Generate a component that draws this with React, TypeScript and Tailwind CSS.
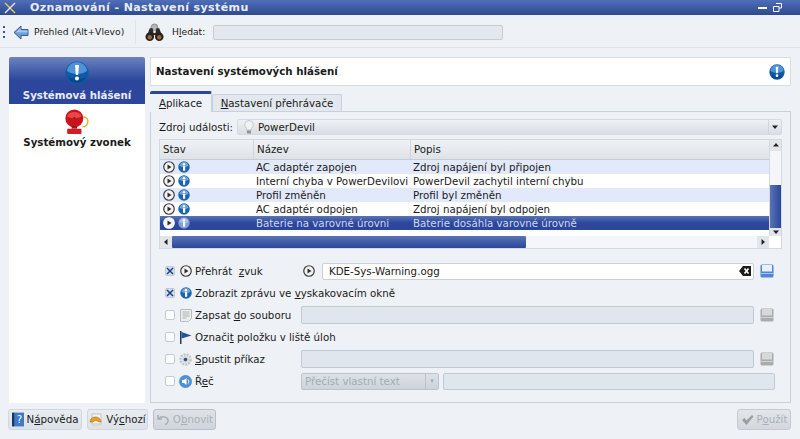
import type { ReactNode } from 'react';

// ─── Icons ─────────────────────────────────────────────────────────────────

function InfoIcon({ size = 12, light = false }: { size?: number; light?: boolean }) {
  return (
    <svg width={size} height={size} viewBox="0 0 24 24" className="shrink-0">
      <circle cx="12" cy="12" r="11.5" fill={light ? '#7f9fd6' : '#1c62ae'} />
      <path d="M3 10a9 8 0 0 1 18 0c-5 3-13 3-18 0z" fill={light ? '#a9c2ea' : '#6ba3dc'} />
      <circle cx="12" cy="6.5" r="2.4" fill="#fff" />
      <rect x="10" y="10" width="4.4" height="9.5" fill="#fff" />
    </svg>
  );
}

function AlertIcon({ size = 24 }: { size?: number }) {
  return (
    <svg width={size} height={size} viewBox="0 0 24 24" className="shrink-0">
      <circle cx="12" cy="12" r="11.5" fill="#0f5aa6" />
      <path d="M2 10a10 9 0 0 1 20 0c-5 4-15 4-20 0z" fill="#4f93d6" />
      <path d="M12 22a10 10 0 0 0 9-6c-4 2-14 2-18 0a10 10 0 0 0 9 6z" fill="#0b4789" />
      <path d="M10 4h4l-.8 10h-2.4z" fill="#fff" />
      <circle cx="12" cy="17.5" r="2" fill="#fff" />
    </svg>
  );
}

function PlayIcon({ light = false }: { light?: boolean }) {
  return (
    <svg width="12" height="12" viewBox="0 0 24 24" className="shrink-0">
      <circle cx="12" cy="12" r="10.5" fill="#f4f4f4" stroke={light ? '#fff' : '#3c3c3c'} strokeWidth="2.4" />
      <path d="M9 7l8 5-8 5z" fill="#2e2e2e" />
    </svg>
  );
}

function BackArrow() {
  return (
    <svg width="16" height="15" viewBox="0 0 16 15" className="shrink-0">
      <path d="M1 7.5L8 1v3.5h7v6H8V14z" fill="#6f9fd8" stroke="#2f5f9c" strokeWidth="1" />
      <path d="M3 7.2L7.5 3v2.500h7v2z" fill="#a9c8ec" />
    </svg>
  );
}

function Binoculars() {
  return (
    <svg width="19" height="19" viewBox="0 0 20 19" className="shrink-0">
      <circle cx="10" cy="4" r="3.5" fill="#b5b5b5" stroke="#8a8a8a" strokeWidth="1" />
      <path d="M5 5h3l1 5h2l1-5h3l3 8H12l-2-1-2 1H2z" fill="#2b2b2b" />
      <circle cx="5" cy="14" r="4.5" fill="#222" />
      <circle cx="15" cy="14" r="4.5" fill="#222" />
      <circle cx="5" cy="14.5" r="2.3" fill="#a8652a" />
      <circle cx="15" cy="14.5" r="2.3" fill="#a8652a" />
    </svg>
  );
}

function Bell() {
  return (
    <svg width="24" height="25" viewBox="0 0 26 28" className="shrink-0">
      <path d="M17 10c5-3 9 1 8 5-.7 3-3 5-6 5" fill="none" stroke="#e2ad2c" strokeWidth="1.5" />
      <circle cx="10" cy="10.5" r="10" fill="#c8141c" />
      <path d="M2 8a8.5 7 0 0 1 16 0c-4 3-12 3-16 0z" fill="#e8474a" />
      <circle cx="10" cy="10" r="1" fill="#7d0d12" />
      <rect x="7" y="19" width="6" height="3" fill="#a81218" />
      <rect x="2" y="22" width="16" height="6" rx="1" fill="#d01c22" />
    </svg>
  );
}

function Bulb() {
  return (
    <svg width="10" height="14" viewBox="0 0 10 14" className="shrink-0">
      <path d="M5 .5a4.3 4.3 0 0 1 2.5 7.800V10h-5V8.300A4.3 4.3 0 0 1 5 .5z" fill="#f2f2f2" stroke="#c4c8cc" />
      <rect x="3" y="10.5" width="4" height="3" fill="#8f9296" />
    </svg>
  );
}

function Floppy({ active = false }: { active?: boolean }) {
  return (
    <svg width="14" height="14" viewBox="0 0 14 14" className="shrink-0">
      <rect x=".5" y=".5" width="13" height="13" rx="1.5" fill={active ? '#4f86d8' : '#a9acae'} />
      <rect x="2" y="1" width="10" height="6.5" fill={active ? '#e9f0fb' : '#d6d8da'} />
      <rect x="1" y="9" width="12" height="1" fill={active ? '#a6c6f0' : '#d0d2d4'} />
    </svg>
  );
}

function ClearIcon() {
  return (
    <svg width="12" height="10" viewBox="0 0 12 10" className="shrink-0">
      <path d="M0 5l4-5h8v10H4z" fill="#1c1c1c" />
      <path d="M5.5 2.500l4 5m0-5l-4 5" stroke="#fff" strokeWidth="1.6" />
    </svg>
  );
}

function DocIcon() {
  return (
    <svg width="12" height="13" viewBox="0 0 12 13" className="shrink-0">
      <path d="M.5.5h11v9l-3 3h-8z" fill="#eceded" stroke="#b9bcbe" />
      <path d="M2.5 3h7M2.5 5h7M2.5 7h7M2.5 9h4" stroke="#b0b3b6" />
    </svg>
  );
}

function FlagIcon() {
  return (
    <svg width="13" height="13" viewBox="0 0 13 13" className="shrink-0">
      <rect x="1" y="0" width="1.5" height="13" fill="#1c3f7c" />
      <path d="M2.5 1l10 3.500-10 3z" fill="#24519c" />
    </svg>
  );
}

function GearIcon() {
  return (
    <svg width="13" height="13" viewBox="0 0 13 13" className="shrink-0">
      <circle cx="6.5" cy="6.5" r="5" fill="none" stroke="#c3c6c8" strokeWidth="2.5" strokeDasharray="2 1" />
      <circle cx="6.5" cy="6.5" r="3.5" fill="#d8dadc" />
      <circle cx="6.5" cy="6.5" r="1.8" fill="#2f4f78" />
    </svg>
  );
}

function SpeechIcon() {
  return (
    <svg width="13" height="13" viewBox="0 0 13 13" className="shrink-0">
      <circle cx="6.5" cy="6.5" r="6.5" fill="#4e8fd8" />
      <path d="M3 5h2l2.5-2v7L5 8H3z" fill="#fff" />
      <path d="M9 4.5c1 1 1 3 0 4" stroke="#fff" fill="none" />
    </svg>
  );
}

function HelpIcon() {
  return (
    <svg width="12" height="15" viewBox="0 0 13 15" className="shrink-0">
      <rect x="0" y="0" width="3" height="15" fill="#12386e" />
      <rect x="3" y="0" width="10" height="15" fill="#3f78c4" />
      <text x="8" y="11.5" fontSize="11" textAnchor="middle" fill="#fff" fontFamily="DejaVu Sans">?</text>
    </svg>
  );
}

function DefaultsIcon() {
  return (
    <svg width="14" height="14" viewBox="0 0 14 14" className="shrink-0">
      <rect x="3" y="1" width="9" height="10" fill="#f3f3f3" stroke="#c4c4c4" />
      <path d="M1 9a5.5 5 0 0 1 11 0l-3-.5a2.8 2.2 0 0 0-5 .5z" fill="#e8a21c" stroke="#a86a10" strokeWidth=".6" />
      <rect x="3" y="10" width="7" height="3" fill="#d8d8d8" />
    </svg>
  );
}

function UndoIcon() {
  return (
    <svg width="14" height="12" viewBox="0 0 14 12" className="shrink-0">
      <path d="M2 1v4h4M2.5 5C5 2 11 2 12 6c.4 2-1 4-3 4.500" fill="none" stroke="#a9adb2" strokeWidth="1.5" />
    </svg>
  );
}

function CheckIcon() {
  return (
    <svg width="13" height="12" viewBox="0 0 13 12" className="shrink-0">
      <path d="M1 6l2.500-2 2 2.500L11 1l1.500 1.500L5.500 11z" fill="#9a9ea3" />
    </svg>
  );
}

function Arrow({ dir }: { dir: 'up' | 'down' | 'left' | 'right' }) {
  const d = {
    up: 'M1 5.500l3-3.500 3 3.500z',
    down: 'M1 2.500l3 3.500 3-3.500z',
    left: 'M5.500 1L2 4l3.500 3z',
    right: 'M2.500 1L6 4 2.500 7z',
  }[dir];
  return (
    <svg width="8" height="8" viewBox="0 0 8 8" className="shrink-0">
      <path d={d} fill="#222" />
    </svg>
  );
}

// ─── Pieces ────────────────────────────────────────────────────────────────

function Check({ on = false }: { on?: boolean }) {
  return (
    <span
      className={`flex h-[10px] w-[10px] shrink-0 items-center justify-center rounded-[2px] border border-[#c3cad3] ${
        on ? 'bg-[#d5dff0]' : 'bg-white'
      }`}
    >
      {on && (
        <svg width="8" height="8" viewBox="0 0 8 8">
          <path d="M1 1l6 6m0-6L1 7" stroke="#1d3f8c" strokeWidth="1.5" />
        </svg>
      )}
    </span>
  );
}

function U({ children }: { children: ReactNode }) {
  return <span className="underline underline-offset-1">{children}</span>;
}

const EVENTS = [
  { nazev: 'AC adaptér zapojen', popis: 'Zdroj napájení byl připojen' },
  { nazev: 'Interní chyba v PowerDevilovi', popis: 'PowerDevil zachytil interní chybu' },
  { nazev: 'Profil změněn', popis: 'Profil byl změněn' },
  { nazev: 'AC adaptér odpojen', popis: 'Zdroj napájení byl odpojen' },
];

const disabledField = 'h-[18px] rounded-[2px] border border-[#c2c9d0] bg-[#dfe6ed]';

function FormRow({ on = false, icon, label, children }: { on?: boolean; icon: ReactNode; label: ReactNode; children?: ReactNode }) {
  return (
    <div className="flex h-[22px] items-center">
      <Check on={on} />
      <span className="ml-[4px] flex w-[13px] justify-center">{icon}</span>
      <span className="ml-[3px] w-[106px] shrink-0 whitespace-nowrap">{label}</span>
      {children}
    </div>
  );
}

export default function App() {
  return (
    <div className="flex h-[439px] w-[800px] flex-col overflow-hidden bg-[#eef1f6] font-['DejaVu_Sans',sans-serif] text-[10.25px] leading-none text-[#1a1a1a]">
      {/* Title bar */}
      <div className="flex h-[15px] shrink-0 items-center justify-between bg-gradient-to-b from-[#4e6fb8] to-[#2f4a8e] pl-[4px] pr-[18px] text-white">
        <div className="flex items-center">
          <svg width="12" height="12" viewBox="0 0 12 12">
            <path d="M1 1l10 10" stroke="#e4c35a" strokeWidth="1.5" />
            <path d="M11 1L1 11" stroke="#e6e6e6" strokeWidth="1.5" />
          </svg>
          <span className="ml-[14px] text-[11px] font-bold tracking-[0.4px] text-[#e8edf8]">Oznamování - Nastavení systému</span>
        </div>
        <div className="flex items-center gap-[6px]">
          <span className="h-[2px] w-[9px] bg-white" />
          <svg width="9" height="9" viewBox="0 0 9 9">
            <path d="M3 .5h5.5V5H6M.5 3.5H6V8.5H.5z" fill="none" stroke="#fff" />
          </svg>
        </div>
      </div>

      {/* Toolbar */}
      <div className="flex h-[33px] shrink-0 items-center border-b border-[#dfe3e9] pl-[3px] pt-[2px] text-[9.2px]">
        <div className="flex flex-col gap-[3px]">
          <span className="h-[2px] w-[2px] bg-[#2f5a9c]" />
          <span className="h-[2px] w-[2px] bg-[#2f5a9c]" />
          <span className="h-[2px] w-[2px] bg-[#2f5a9c]" />
        </div>
        <span className="ml-[8px]">
          <BackArrow />
        </span>
        <span className="ml-[5px] w-[92px] whitespace-nowrap">Přehled (Alt+Vlevo)</span>
        <span className="ml-[9px] h-[24px] w-px bg-[#dfe3e9]" />
        <span className="ml-[9px]">
          <Binoculars />
        </span>
        <span className="ml-[8px] w-[34px] whitespace-nowrap">
          H<U>l</U>edat:
        </span>
        <span className="ml-[7px] h-[15px] w-[290px] rounded-[2px] border border-[#c6ccd3] bg-[#e3e8ee]" />
      </div>

      {/* Main */}
      <div className="flex h-[355px] shrink-0 gap-[5px] pl-[9px] pr-[9px] pt-[9px]">
        {/* Sidebar */}
        <div className="flex w-[136px] shrink-0 flex-col items-center bg-white font-bold">
          <div className="flex h-[47px] w-full flex-col items-center rounded-t-[2px] bg-gradient-to-b from-[#6b83bd] via-[#2c469b] to-[#2c469b] pt-[4px] text-[#e9edf7]">
            <AlertIcon />
            <span className="mt-[5px] whitespace-nowrap">Systémová hlášení</span>
          </div>
          <div className="mt-[5px]">
            <Bell />
          </div>
          <span className="mt-[3px] whitespace-nowrap">Systémový zvonek</span>
        </div>

        {/* Content */}
        <div className="flex min-w-0 flex-1 flex-col">
          <div className="flex h-[29px] shrink-0 items-center justify-between border border-[#d6dde6] bg-white pl-[5px] pr-[5px] font-bold">
            <span>Nastavení systémových hlášení</span>
            <AlertIcon size={16} />
          </div>

          {/* Tabs */}
          <div className="mt-[5px] flex h-[20px] shrink-0 items-end">
            <div className="z-10 -mb-px flex h-[21px] w-[62px] items-center justify-center rounded-t-[2px] border-t-[3px] border-r border-t-[#2c469b] border-r-[#c8d0d9] bg-[#eef1f6]">
              <span>
                <U>A</U>plikace
              </span>
            </div>
            <div className="flex h-[17px] w-[130px] items-center justify-center rounded-t-[2px] border border-b-0 border-[#c8d0d9] bg-[#e3e8ee]">
              <span>
                <U>N</U>astavení přehrávače
              </span>
            </div>
          </div>

          <div className="flex min-h-0 flex-1 flex-col border border-[#c8d0d9] pl-[8px] pr-[8px] pt-[7px]">
            {/* Combo */}
            <div className="flex h-[16px] shrink-0 items-center">
              <span className="w-[78px] whitespace-nowrap">Zdroj události:</span>
              <div className="flex h-[16px] flex-1 items-center rounded-[2px] border border-[#d4dae1] bg-gradient-to-b from-[#eef1f5] to-[#d9dee4] pl-[6px]">
                <Bulb />
                <span className="ml-[4px] flex-1">PowerDevil</span>
                <span className="flex h-full w-[13px] items-center justify-center border-l border-[#cfd5dc]">
                  <Arrow dir="down" />
                </span>
              </div>
            </div>

            {/* Table */}
            <div className="mt-[4px] flex h-[110px] shrink-0 flex-col border border-[#d3d9e0] bg-white">
              <div className="flex min-h-0 flex-1">
                <div className="flex min-w-0 flex-1 flex-col">
                  <div className="flex h-[20px] shrink-0 items-center border-b border-[#c5ccd4] bg-gradient-to-b from-[#eef1f5] to-[#dfe3e8]">
                    <span className="w-[94px] border-r border-[#cfd5dc] pl-[3px] leading-[19px]">Stav</span>
                    <span className="w-[157px] border-r border-[#cfd5dc] pl-[3px] leading-[19px]">Název</span>
                    <span className="flex-1 pl-[3px] leading-[19px]">Popis</span>
                  </div>
                  {EVENTS.map((ev, i) => (
                    <div key={ev.nazev} className={`flex h-[14px] shrink-0 items-center ${i % 2 === 0 ? 'bg-[#e2e9fb]' : 'bg-white'}`}>
                      <span className="flex w-[94px] items-center gap-[3px] pl-[3px]">
                        <PlayIcon />
                        <InfoIcon />
                      </span>
                      <span className="w-[157px] whitespace-nowrap pl-[2px]">{ev.nazev}</span>
                      <span className="flex-1 whitespace-nowrap pl-[2px]">{ev.popis}</span>
                    </div>
                  ))}
                  <div className="flex h-[14px] shrink-0 items-center bg-gradient-to-b from-[#5a74b4] via-[#2c469b] to-[#2c469b] text-[#cdd8f0]">
                    <span className="flex w-[94px] items-center gap-[3px] pl-[3px]">
                      <PlayIcon light />
                      <InfoIcon light />
                    </span>
                    <span className="w-[157px] whitespace-nowrap pl-[2px]">Baterie na varovné úrovni</span>
                    <span className="flex-1 whitespace-nowrap pl-[2px]">Baterie dosáhla varovné úrovně</span>
                  </div>
                </div>
                {/* Vertical scrollbar */}
                <div className="flex w-[12px] shrink-0 flex-col border-l border-[#d3d9e0] bg-[#f4f6f9]">
                  <span className="flex h-[11px] items-center justify-center bg-[#e2e6ea]">
                    <Arrow dir="up" />
                  </span>
                  <span className="h-[36px]" />
                  <span className="h-[44px] bg-gradient-to-r from-[#5a74b4] to-[#2c469b]" />
                  <span className="flex flex-1 items-center justify-center bg-[#e2e6ea]">
                    <Arrow dir="down" />
                  </span>
                </div>
              </div>
              {/* Horizontal scrollbar */}
              <div className="flex h-[12px] shrink-0 items-stretch pr-[12px]">
                <span className="flex w-[12px] items-center justify-center bg-[#e2e6ea]">
                  <Arrow dir="left" />
                </span>
                <span className="w-[354px] rounded-[1px] bg-gradient-to-b from-[#5a74b4] to-[#2c469b]" />
                <span className="flex-1 bg-[#f4f6f9]" />
                <span className="flex w-[12px] items-center justify-center bg-[#e2e6ea]">
                  <Arrow dir="right" />
                </span>
              </div>
            </div>

            {/* Actions */}
            <div className="mt-[11px] flex flex-col pl-[6px]">
              <FormRow
                on
                icon={<PlayIcon />}
                label={
                  <>
                    Přehrát &nbsp;<U>z</U>vuk
                  </>
                }
              >
                <span className="ml-[2px]">
                  <PlayIcon />
                </span>
                <div className="ml-[7px] flex h-[17px] w-[432px] items-center justify-between rounded-[2px] border border-[#c9d0d8] bg-white pl-[6px] pr-[2px]">
                  <span>KDE-Sys-Warning.ogg</span>
                  <ClearIcon />
                </div>
                <span className="ml-[6px]">
                  <Floppy active />
                </span>
              </FormRow>
              <FormRow
                on
                icon={<InfoIcon />}
                label={
                  <>
                    Zobrazit zprávu ve <U>v</U>yskakovacím okně
                  </>
                }
              />
              <FormRow
                icon={<DocIcon />}
                label={
                  <>
                    Zapsat <U>d</U>o souboru
                  </>
                }
              >
                <div className={`w-[453px] ${disabledField}`} />
                <span className="ml-[6px]">
                  <Floppy />
                </span>
              </FormRow>
              <FormRow
                icon={<FlagIcon />}
                label={
                  <>
                    Označi<U>t</U> položku v liště úloh
                  </>
                }
              />
              <FormRow
                icon={<GearIcon />}
                label={
                  <>
                    <U>S</U>pustit příkaz
                  </>
                }
              >
                <div className={`w-[453px] ${disabledField}`} />
                <span className="ml-[6px]">
                  <Floppy />
                </span>
              </FormRow>
              <FormRow
                icon={<SpeechIcon />}
                label={
                  <>
                    Ř<U>e</U>č
                  </>
                }
              >
                <div className="flex h-[17px] w-[138px] shrink-0 items-center rounded-[2px] border border-[#bcc2c9] bg-gradient-to-b from-[#dde2e8] to-[#cdd3da] pl-[3px] text-[#a4abb3]">
                  <span className="flex-1 whitespace-nowrap">Přečíst vlastní text</span>
                  <span className="flex h-full w-[13px] items-center justify-center border-l border-[#bcc2c9] text-[7px]">▾</span>
                </div>
                <div className="ml-[4px] h-[17px] w-[332px] rounded-[2px] border border-[#c2c9d0] bg-[#dfe6ed]" />
              </FormRow>
            </div>
          </div>
        </div>
      </div>

      {/* Footer */}
      <div className="flex flex-1 items-start pl-[8px] pr-[9px] pt-[6px]">
        <button className="flex h-[21px] w-[74px] items-center justify-center gap-[3px] rounded-[3px] border border-[#d0d7df] bg-gradient-to-b from-[#e9edf2] to-[#dde2e8]">
          <HelpIcon />
          <span>
            N<U>á</U>pověda
          </span>
        </button>
        <button className="ml-[5px] flex h-[21px] w-[61px] items-center justify-center gap-[3px] rounded-[3px] border border-[#d0d7df] bg-gradient-to-b from-[#e9edf2] to-[#dde2e8]">
          <DefaultsIcon />
          <span>
            Vý<U>c</U>hozí
          </span>
        </button>
        <button className="ml-[5px] flex h-[21px] w-[63px] items-center justify-center gap-[3px] rounded-[3px] border border-[#b9bfc6] bg-gradient-to-b from-[#dfe3e8] to-[#cfd5dc] text-[#a9afb6]">
          <UndoIcon />
          <span>
            O<U>b</U>novit
          </span>
        </button>
        <button className="ml-auto flex h-[21px] w-[54px] items-center justify-center gap-[3px] rounded-[3px] border border-[#c4cad1] bg-gradient-to-b from-[#e3e7eb] to-[#d2d7dd] text-[#a9afb6]">
          <CheckIcon />
          <span>
            P<U>o</U>užít
          </span>
        </button>
      </div>
    </div>
  );
}
